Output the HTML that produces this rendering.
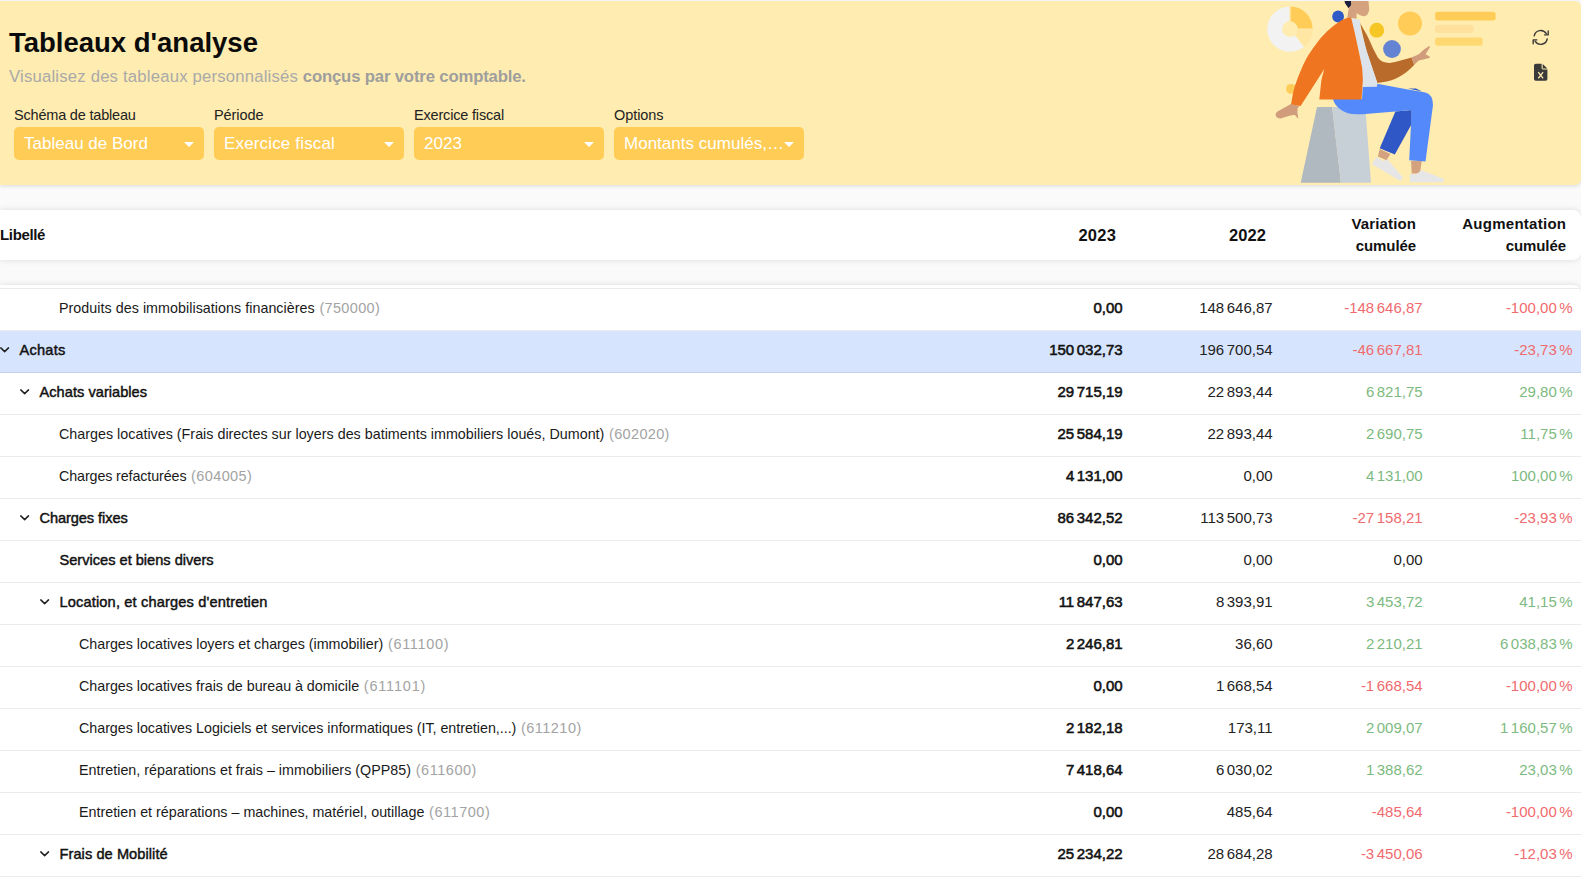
<!DOCTYPE html><html lang="fr"><head><meta charset="utf-8"><title>Tableaux d'analyse</title><style>
*{box-sizing:border-box}
html,body{margin:0;padding:0}
body{width:1581px;height:877px;overflow:hidden;background:#fafafa;font-family:"Liberation Sans",sans-serif;color:#111;position:relative}
.hdr{position:absolute;left:0;top:0;width:1581px;height:185px}
.hbg{position:absolute;left:0;top:1px;width:1581px;height:184px;background:#ffecb0;border-radius:0 6px 6px 0;box-shadow:0 1px 4px rgba(0,0,0,.13)}
.hline{position:absolute;left:0;top:0;width:1581px;height:1px;background:#f4f5f9}
.abs{position:absolute;white-space:nowrap}
.title{left:9px;top:27px;font-size:27.5px;font-weight:bold;line-height:32px;color:#0b0b0b}
.sub{left:9px;top:66px;font-size:16.7px;line-height:22px;color:#a9a9a9}
.sub b{color:#9e9e9e}
.lab{top:106px;font-size:14.5px;line-height:18px;color:#222}
.sel{top:127px;width:190px;height:33px;border-radius:5px;background:#ffcc55;color:#fff;font-size:17px;line-height:33px;padding-left:10px}
.sel i{position:absolute;right:10px;top:15px;width:0;height:0;border-left:5px solid transparent;border-right:5px solid transparent;border-top:5px solid #fff}
.thead{position:absolute;left:0;top:210px;width:1581px;height:50px;background:#fff;border-radius:0 8px 8px 0;box-shadow:0 0 6px rgba(0,0,0,.13)}
.th{font-weight:bold;font-size:15px;line-height:22px;color:#111;text-align:right}
.tbody{position:absolute;left:0;top:285px;width:1581px;height:600px;background:#fff;box-shadow:0 0 6px rgba(0,0,0,.13);border-radius:0 8px 0 0;overflow:hidden}
.row{position:absolute;left:0;width:1581px;height:42px;border-bottom:1px solid #ebebeb}
.row.hl{background:#d6e4fd;border-bottom-color:#c3d0e8}
.l{top:0;line-height:39px;font-size:14.3px;color:#1a1a1a}
.l.b{color:#111;font-size:14.6px;-webkit-text-stroke:0.45px #111;margin-left:.5px}
.l em{font-style:normal;color:#a3a3a3;font-size:14.5px;margin-left:.7px}
.n{top:0;line-height:37px;font-size:15px;word-spacing:-1.67px;margin-right:-.6px;text-align:right;color:#222}
.n.b{color:#111;-webkit-text-stroke:0.55px #111}
.n.r{color:#f06a6e}
.n.g{color:#7dba80}
.chev{position:absolute;width:10px;height:6px}
</style></head><body>
<div class="hdr"><div class="hbg"></div>
<svg class="illu" width="1581" height="185" viewBox="0 0 1581 185" style="position:absolute;left:0;top:0">
<g>
<!-- donut -->
<path d="M1289.3 6.4 A22.7 22.7 0 1 0 1304 46.9 L1294.8 35.2 A7.8 7.8 0 1 1 1289.3 21.3 Z" fill="#f2f2f2"/>
<path d="M1290.7 6.4 A22.7 22.7 0 0 1 1312.7 28.6 L1297.8 28.6 A7.8 7.8 0 0 0 1290.7 21.3 Z" fill="#ffcd57"/>
<path d="M1312.7 29.6 A22.7 22.7 0 0 1 1304.6 46.4 L1295.3 34.8 A7.8 7.8 0 0 0 1297.8 29.6 Z" fill="#ffe6a3"/>
<!-- circles -->
<circle cx="1338.1" cy="16.5" r="5.9" fill="#2f5ac8"/>
<circle cx="1376.8" cy="30.2" r="7.4" fill="#f6c624"/>
<circle cx="1410" cy="23.4" r="12" fill="#ffcd57"/>
<circle cx="1392" cy="49" r="8.9" fill="#6583d3"/>
<circle cx="1291.1" cy="88.9" r="5" fill="#ffcd57"/>
<!-- bars -->
<rect x="1435.1" y="11.8" width="60.5" height="8.8" rx="2.5" fill="#ffcd57"/>
<rect x="1435.1" y="24.7" width="38.3" height="8.2" rx="2.5" fill="#ffe09c"/>
<rect x="1435.1" y="37.5" width="47.4" height="8.2" rx="2.5" fill="#ffd872"/>
<!-- stool -->
<polygon points="1317,107 1332.1,107 1340.9,182.8 1300.7,182.8" fill="#b0b8c0"/>
<polygon points="1332.1,107 1365.3,107 1371,182.8 1340.9,182.8" fill="#c7d0d7"/>
<!-- back leg -->
<polygon points="1395.4,111.4 1411.7,110.1 1411.7,123.9 1394.8,154.6 1379.7,148.3" fill="#2f58c6"/>
<polygon points="1379.7,149 1390.4,154 1386.6,160.3 1377.9,156.5" fill="#d4a27f"/>
<polygon points="1376.6,157.1 1382.9,160.9 1387.3,159.6 1402.9,177.2 1400.4,181 1371.6,164" fill="#e6e6e6"/>
<!-- front ankle + shoe -->
<polygon points="1411.1,161 1421.7,161 1419.9,173.6 1411.7,173.6" fill="#d4a27f"/>
<polygon points="1409.8,174.1 1416,174.3 1421.7,170.3 1443.7,179.1 1443.7,182.2 1409.8,182.2" fill="#e6e6e6"/>
<!-- pants -->
<path d="M1362.8 86.3 L1377.2 83.8 L1408 89.4 L1425.5 92.5 Q1433 94.5 1433 105.1 L1425.5 161.5 L1409.2 160.3 L1411.7 110.1 L1395.4 111.4 L1365.3 113.9 Q1353 114.6 1347.8 113.2 Q1336 109 1332.7 99 L1362 99 Z" fill="#5489fb"/>
<path d="M1408 88.4 L1416 88.6 L1422 91.6 Z" fill="#2f58c6"/>
<!-- head -->
<path d="M1344.1 0 L1345.2 3.4 L1348.6 8.3 L1351.5 5 L1351.2 0 Z" fill="#1b1f3b"/>
<path d="M1351 0 L1368.4 0 L1369.2 8.9 Q1369 12.5 1367.4 14.4 Q1366 16.3 1363.7 16.2 Q1360 15.6 1356.6 13.3 L1356.6 18.8 L1347.2 17.6 L1348.9 8.2 L1351.4 4.9 Z" fill="#d4a27f"/>
<!-- brown arm -->
<path d="M1360 22.8 L1363.4 29 L1366.9 35.1 L1370 41.6 L1373.2 48.7 L1377.8 57.6 Q1379.8 60.4 1382.3 61.5 Q1385.5 62.9 1389.6 62.9 Q1395 62.2 1400.6 60.6 L1411.5 57.4 L1414.3 64.7 Q1410.5 68.8 1406 72.4 Q1401.5 75.6 1396 78.4 Q1391.5 80.2 1386.9 81.5 L1377.3 83.1 L1366 50 Z" fill="#b86b2b"/>
<!-- right hand -->
<path d="M1411.5 57.4 L1418.8 54.2 L1424.3 49.2 L1429.3 45.9 L1430 46.9 L1425.6 54.2 L1430 56.8 L1429.3 57.9 L1418.8 60.6 L1414.3 64.7 Z" fill="#d09c7c"/>
<!-- shirt -->
<polygon points="1350.5,17.9 1360.1,19.8 1360.5,28.7 1366.9,51.5 1374.1,73.3 1377.4,83 1377,86.7 1362,87 1360,57" fill="#dde3ea"/>
<!-- left hand -->
<path d="M1291.3 103.8 L1299.3 106 L1297.6 108.5 L1297.4 112 L1298.3 119 L1294.7 114.7 L1289.4 115.7 L1280.7 118.6 Q1276 118.4 1275.6 115 Q1275.6 113 1277.5 111.6 Z" fill="#d09c7c"/>
<!-- orange jacket -->
<path d="M1347.9 17.5 L1341.1 20.5 L1334.2 25.3 L1327.4 31.1 L1320.5 38.3 L1313.7 47.2 L1308.8 54.5 L1306.8 57.8 L1303.0 65.2 L1298.1 76.9 L1294.7 86.6 L1292.8 94.3 L1291.1 104.2 L1300.6 106.0 L1324.3 69.0 L1321.4 80.0 L1319.3 99.4 L1361.5 99.4 L1362.9 79.8 L1362.2 68.0 L1360.6 60.0 L1358.9 52.0 L1354.8 32.9 L1351.2 17.8 Z" fill="#f07520"/>
</g>
<!-- refresh icon -->
<g fill="none" stroke="#3a3a3a" stroke-width="1.4" stroke-linecap="round" stroke-linejoin="round">
<path d="M1534.2 35.8 A6.6 6.6 0 0 1 1546.3 33.6"/>
<path d="M1547.2 39 A6.6 6.6 0 0 1 1535.1 41.2"/>
<path d="M1544.6 34.9 L1548.2 34.9 L1548.2 31"/>
<path d="M1536.8 39.9 L1533.2 39.9 L1533.2 43.8"/>
</g>
<!-- excel file icon -->
<path d="M1535.8 63.8 H1541.6 V68 Q1541.6 69.4 1543 69.4 H1547.4 V78.9 Q1547.4 80.7 1545.6 80.7 H1535.8 Q1534 80.7 1534 78.9 V65.6 Q1534 63.8 1535.8 63.8 Z M1542.7 63.9 L1547.3 68.4 H1542.7 Z" fill="#3a3a3a"/>
<path d="M1538.3 72.2 L1543.1 78.4 M1543.1 72.2 L1538.3 78.4" stroke="#ffecb0" stroke-width="1.3" fill="none"/>
</svg>

<div class="hline"></div>
<div class="abs title" id="t_title" style="letter-spacing:-0.006px">Tableaux d'analyse</div>
<div class="abs sub" id="t_sub"><span id="t_sub1" style="letter-spacing:0.200px">Visualisez des tableaux personnalisés</span> <b id="t_sub2" style="letter-spacing:-0.152px">conçus par votre comptable</b><b>.</b></div>
<div class="abs lab" id="t_lab0" style="left:14px"><span style="letter-spacing:-0.194px">Schéma de tableau</span></div>
<div class="abs sel" style="left:14px"><span id="t_sel0" style="letter-spacing:0.007px">Tableau de Bord</span><i></i></div>
<div class="abs lab" id="t_lab1" style="left:214px"><span style="letter-spacing:-0.067px">Période</span></div>
<div class="abs sel" style="left:214px"><span id="t_sel1" style="letter-spacing:0.157px">Exercice fiscal</span><i></i></div>
<div class="abs lab" id="t_lab2" style="left:414px"><span style="letter-spacing:-0.179px">Exercice fiscal</span></div>
<div class="abs sel" style="left:414px"><span id="t_sel2" style="letter-spacing:0.067px">2023</span><i></i></div>
<div class="abs lab" id="t_lab3" style="left:614px"><span style="letter-spacing:-0.067px">Options</span></div>
<div class="abs sel" style="left:614px"><span id="t_sel3" style="letter-spacing:0.012px">Montants cumulés,…</span><i></i></div>
</div>
<div class="thead">
<div class="abs th" id="t_th0" style="left:0;top:14px;letter-spacing:-0.350px;margin-right:0.350px">Libellé</div>
<div class="abs th" id="t_th1" style="right:465px;top:14px;font-size:16.5px;letter-spacing:0.300px;margin-right:-0.300px">2023</div>
<div class="abs th" id="t_th2" style="right:315px;top:14px;font-size:16.5px;letter-spacing:0.100px;margin-right:-0.100px">2022</div>
<div class="abs th" style="right:165px;top:3px"><span id="t_th3" style="letter-spacing:0.150px;margin-right:-0.150px">Variation</span><br><span id="t_th4" style="letter-spacing:-0.117px;margin-right:0.117px">cumulée</span></div>
<div class="abs th" style="right:15px;top:3px"><span id="t_th5" style="letter-spacing:0.264px;margin-right:-0.264px">Augmentation</span><br><span id="t_th6" style="letter-spacing:-0.100px;margin-right:0.100px">cumulée</span></div>
</div>
<div class="tbody">
<div class="row" style="top:-38px"></div>
<div class="row" style="top:4px">
<div class="abs l" style="left:59px"><span id="t_l0" style="letter-spacing:0.036px">Produits des immobilisations financières</span> <em id="t_c0" style="letter-spacing:0.329px">(750000)</em></div>
<div class="abs n b" style="right:459px"><span id="t_n0_0">0,00</span></div>
<div class="abs n " style="right:309px"><span id="t_n0_1">148 646,87</span></div>
<div class="abs n r" style="right:159px"><span id="t_n0_2">-148 646,87</span></div>
<div class="abs n r" style="right:9px"><span id="t_n0_3">-100,00 %</span></div>
</div>
<div class="row hl" style="top:46px">
<svg class="chev" style="left:-0.5px;top:16.4px" viewBox="0 0 10 6"><path d="M0.8 0.9 L4.65 4.6 L8.5 0.9" fill="none" stroke="#222" stroke-width="1.5" stroke-linecap="round" stroke-linejoin="round"/></svg>
<div class="abs l b" style="left:19px"><span id="t_l1" style="letter-spacing:0.220px">Achats</span></div>
<div class="abs n b" style="right:459px"><span id="t_n1_0">150 032,73</span></div>
<div class="abs n " style="right:309px"><span id="t_n1_1">196 700,54</span></div>
<div class="abs n r" style="right:159px"><span id="t_n1_2">-46 667,81</span></div>
<div class="abs n r" style="right:9px"><span id="t_n1_3">-23,73 %</span></div>
</div>
<div class="row" style="top:88px">
<svg class="chev" style="left:19.5px;top:16.4px" viewBox="0 0 10 6"><path d="M0.8 0.9 L4.65 4.6 L8.5 0.9" fill="none" stroke="#222" stroke-width="1.5" stroke-linecap="round" stroke-linejoin="round"/></svg>
<div class="abs l b" style="left:39px"><span id="t_l2" style="letter-spacing:0.033px">Achats variables</span></div>
<div class="abs n b" style="right:459px"><span id="t_n2_0">29 715,19</span></div>
<div class="abs n " style="right:309px"><span id="t_n2_1">22 893,44</span></div>
<div class="abs n g" style="right:159px"><span id="t_n2_2">6 821,75</span></div>
<div class="abs n g" style="right:9px"><span id="t_n2_3">29,80 %</span></div>
</div>
<div class="row" style="top:130px">
<div class="abs l" style="left:59px"><span id="t_l3" style="letter-spacing:0.013px">Charges locatives (Frais directes sur loyers des batiments immobiliers loués, Dumont)</span> <em id="t_c3" style="letter-spacing:0.329px">(602020)</em></div>
<div class="abs n b" style="right:459px"><span id="t_n3_0">25 584,19</span></div>
<div class="abs n " style="right:309px"><span id="t_n3_1">22 893,44</span></div>
<div class="abs n g" style="right:159px"><span id="t_n3_2">2 690,75</span></div>
<div class="abs n g" style="right:9px"><span id="t_n3_3">11,75 %</span></div>
</div>
<div class="row" style="top:172px">
<div class="abs l" style="left:59px"><span id="t_l4" style="letter-spacing:-0.111px">Charges refacturées</span> <em id="t_c4" style="letter-spacing:0.386px">(604005)</em></div>
<div class="abs n b" style="right:459px"><span id="t_n4_0">4 131,00</span></div>
<div class="abs n " style="right:309px"><span id="t_n4_1">0,00</span></div>
<div class="abs n g" style="right:159px"><span id="t_n4_2">4 131,00</span></div>
<div class="abs n g" style="right:9px"><span id="t_n4_3">100,00 %</span></div>
</div>
<div class="row" style="top:214px">
<svg class="chev" style="left:19.5px;top:16.4px" viewBox="0 0 10 6"><path d="M0.8 0.9 L4.65 4.6 L8.5 0.9" fill="none" stroke="#222" stroke-width="1.5" stroke-linecap="round" stroke-linejoin="round"/></svg>
<div class="abs l b" style="left:39px"><span id="t_l5" style="letter-spacing:-0.083px">Charges fixes</span></div>
<div class="abs n b" style="right:459px"><span id="t_n5_0">86 342,52</span></div>
<div class="abs n " style="right:309px"><span id="t_n5_1">113 500,73</span></div>
<div class="abs n r" style="right:159px"><span id="t_n5_2">-27 158,21</span></div>
<div class="abs n r" style="right:9px"><span id="t_n5_3">-23,93 %</span></div>
</div>
<div class="row" style="top:256px">
<div class="abs l b" style="left:59px"><span id="t_l6" style="letter-spacing:0.000px">Services et biens divers</span></div>
<div class="abs n b" style="right:459px"><span id="t_n6_0">0,00</span></div>
<div class="abs n " style="right:309px"><span id="t_n6_1">0,00</span></div>
<div class="abs n " style="right:159px"><span id="t_n6_2">0,00</span></div>
</div>
<div class="row" style="top:298px">
<svg class="chev" style="left:39.5px;top:16.4px" viewBox="0 0 10 6"><path d="M0.8 0.9 L4.65 4.6 L8.5 0.9" fill="none" stroke="#222" stroke-width="1.5" stroke-linecap="round" stroke-linejoin="round"/></svg>
<div class="abs l b" style="left:59px"><span id="t_l7" style="letter-spacing:0.152px">Location, et charges d'entretien</span></div>
<div class="abs n b" style="right:459px"><span id="t_n7_0">11 847,63</span></div>
<div class="abs n " style="right:309px"><span id="t_n7_1">8 393,91</span></div>
<div class="abs n g" style="right:159px"><span id="t_n7_2">3 453,72</span></div>
<div class="abs n g" style="right:9px"><span id="t_n7_3">41,15 %</span></div>
</div>
<div class="row" style="top:340px">
<div class="abs l" style="left:79px"><span id="t_l8" style="letter-spacing:-0.019px">Charges locatives loyers et charges (immobilier)</span> <em id="t_c8" style="letter-spacing:0.686px">(611100)</em></div>
<div class="abs n b" style="right:459px"><span id="t_n8_0">2 246,81</span></div>
<div class="abs n " style="right:309px"><span id="t_n8_1">36,60</span></div>
<div class="abs n g" style="right:159px"><span id="t_n8_2">2 210,21</span></div>
<div class="abs n g" style="right:9px"><span id="t_n8_3">6 038,83 %</span></div>
</div>
<div class="row" style="top:382px">
<div class="abs l" style="left:79px"><span id="t_l9" style="letter-spacing:-0.028px">Charges locatives frais de bureau à domicile</span> <em id="t_c9" style="letter-spacing:0.814px">(611101)</em></div>
<div class="abs n b" style="right:459px"><span id="t_n9_0">0,00</span></div>
<div class="abs n " style="right:309px"><span id="t_n9_1">1 668,54</span></div>
<div class="abs n r" style="right:159px"><span id="t_n9_2">-1 668,54</span></div>
<div class="abs n r" style="right:9px"><span id="t_n9_3">-100,00 %</span></div>
</div>
<div class="row" style="top:424px">
<div class="abs l" style="left:79px"><span id="t_l10" style="letter-spacing:-0.029px">Charges locatives Logiciels et services informatiques (IT, entretien,...)</span> <em id="t_c10" style="letter-spacing:0.471px">(611210)</em></div>
<div class="abs n b" style="right:459px"><span id="t_n10_0">2 182,18</span></div>
<div class="abs n " style="right:309px"><span id="t_n10_1">173,11</span></div>
<div class="abs n g" style="right:159px"><span id="t_n10_2">2 009,07</span></div>
<div class="abs n g" style="right:9px"><span id="t_n10_3">1 160,57 %</span></div>
</div>
<div class="row" style="top:466px">
<div class="abs l" style="left:79px"><span id="t_l11" style="letter-spacing:0.012px">Entretien, réparations et frais – immobiliers (QPP85)</span> <em id="t_c11" style="letter-spacing:0.543px">(611600)</em></div>
<div class="abs n b" style="right:459px"><span id="t_n11_0">7 418,64</span></div>
<div class="abs n " style="right:309px"><span id="t_n11_1">6 030,02</span></div>
<div class="abs n g" style="right:159px"><span id="t_n11_2">1 388,62</span></div>
<div class="abs n g" style="right:9px"><span id="t_n11_3">23,03 %</span></div>
</div>
<div class="row" style="top:508px">
<div class="abs l" style="left:79px"><span id="t_l12" style="letter-spacing:-0.005px">Entretien et réparations – machines, matériel, outillage</span> <em id="t_c12" style="letter-spacing:0.529px">(611700)</em></div>
<div class="abs n b" style="right:459px"><span id="t_n12_0">0,00</span></div>
<div class="abs n " style="right:309px"><span id="t_n12_1">485,64</span></div>
<div class="abs n r" style="right:159px"><span id="t_n12_2">-485,64</span></div>
<div class="abs n r" style="right:9px"><span id="t_n12_3">-100,00 %</span></div>
</div>
<div class="row" style="top:550px">
<svg class="chev" style="left:39.5px;top:16.4px" viewBox="0 0 10 6"><path d="M0.8 0.9 L4.65 4.6 L8.5 0.9" fill="none" stroke="#222" stroke-width="1.5" stroke-linecap="round" stroke-linejoin="round"/></svg>
<div class="abs l b" style="left:59px"><span id="t_l13" style="letter-spacing:0.069px">Frais de Mobilité</span></div>
<div class="abs n b" style="right:459px"><span id="t_n13_0">25 234,22</span></div>
<div class="abs n " style="right:309px"><span id="t_n13_1">28 684,28</span></div>
<div class="abs n r" style="right:159px"><span id="t_n13_2">-3 450,06</span></div>
<div class="abs n r" style="right:9px"><span id="t_n13_3">-12,03 %</span></div>
</div>
</div>
</body></html>
